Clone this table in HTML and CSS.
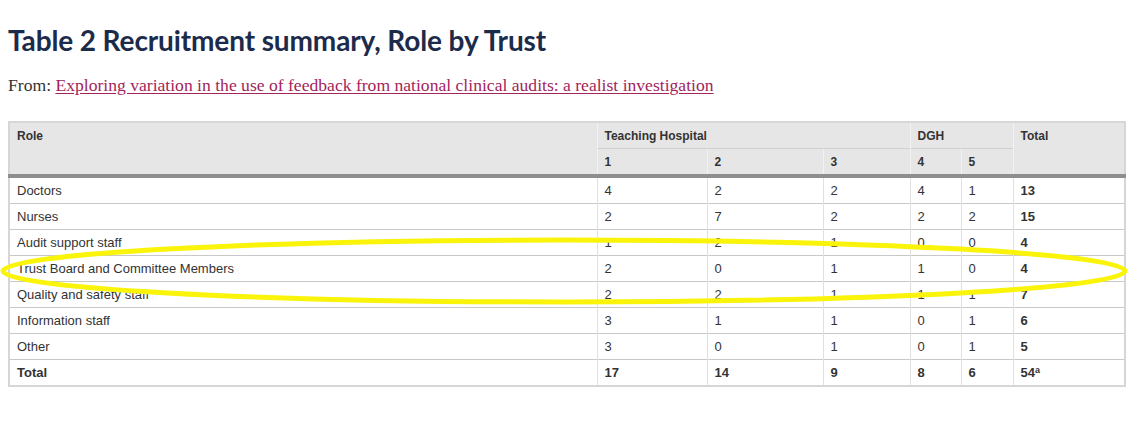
FILE: index.html
```html
<!DOCTYPE html>
<html lang="en">
<head>
<meta charset="utf-8">
<title>Table 2 Recruitment summary, Role by Trust</title>
<link rel="stylesheet" href="styles.css">
</head>
<body>
<div class="page">
  <h1 class="title">Table 2 Recruitment summary, Role by Trust</h1>
  <p class="from">From: <a class="src-link" href="#">Exploring variation in the use of feedback from national clinical audits: a realist investigation</a></p>
  <table class="data">
    <colgroup>
      <col class="c-role"><col class="c-1"><col class="c-2"><col class="c-3"><col class="c-4"><col class="c-5"><col class="c-total">
    </colgroup>
    <thead>
      <tr>
        <th rowspan="2">Role</th>
        <th colspan="3" class="grp">Teaching Hospital</th>
        <th colspan="2" class="grp">DGH</th>
        <th rowspan="2">Total</th>
      </tr>
      <tr class="sub">
        <th>1</th><th>2</th><th>3</th><th>4</th><th>5</th>
      </tr>
    </thead>
    <tbody>
      <tr><td>Doctors</td><td>4</td><td>2</td><td>2</td><td>4</td><td>1</td><td class="b">13</td></tr>
      <tr><td>Nurses</td><td>2</td><td>7</td><td>2</td><td>2</td><td>2</td><td class="b">15</td></tr>
      <tr><td>Audit support staff</td><td>1</td><td>2</td><td>1</td><td>0</td><td>0</td><td class="b">4</td></tr>
      <tr><td>Trust Board and Committee Members</td><td>2</td><td>0</td><td>1</td><td>1</td><td>0</td><td class="b">4</td></tr>
      <tr><td>Quality and safety staff</td><td>2</td><td>2</td><td>1</td><td>1</td><td>1</td><td class="b">7</td></tr>
      <tr><td>Information staff</td><td>3</td><td>1</td><td>1</td><td>0</td><td>1</td><td class="b">6</td></tr>
      <tr><td>Other</td><td>3</td><td>0</td><td>1</td><td>0</td><td>1</td><td class="b">5</td></tr>
      <tr class="tot"><td>Total</td><td>17</td><td>14</td><td>9</td><td>8</td><td>6</td><td>54<sup>a</sup></td></tr>
    </tbody>
  </table>
</div>
<svg class="mark" width="1141" height="446" viewBox="0 0 1141 446" aria-hidden="true">
  <ellipse cx="564" cy="271" rx="561" ry="31" fill="none" stroke="#faf40a" stroke-width="5"/>
</svg>
</body>
</html>
```
FILE: styles.css
```css
html, body {
  margin: 0;
  padding: 0;
  background: #ffffff;
}

.page {
  padding: 23px 0 0 8px;
}

.title {
  margin: 0;
  font-family: Lato, "Open Sans", sans-serif;
  font-weight: 700;
  font-size: 28px;
  line-height: 34px;
  letter-spacing: -0.12px;
  color: #1d2b4b;
}

.from {
  margin: 18px 0 0 0;
  font-family: "Liberation Serif", "DejaVu Serif", serif;
  font-size: 17.6px;
  line-height: 20px;
  color: #333333;
}

.src-link {
  color: #a2245a;
  text-decoration: underline;
  text-underline-offset: 2px;
}

.data {
  margin-top: 26px;
  width: 1116px;
  border-collapse: collapse;
  border: 2px solid #d6d6d6;
  font-family: "Liberation Sans", Arial, sans-serif;
  font-size: 13px;
  color: #333333;
  table-layout: fixed;
}

.c-role { width: 588px; }
.c-1 { width: 110px; }
.c-2 { width: 116px; }
.c-3 { width: 87px; }
.c-4 { width: 51px; }
.c-5 { width: 52px; }
.c-total { width: 112px; }

.data th,
.data td {
  text-align: left;
  padding: 0 7px;
  height: 25px;
  line-height: 16px;
  vertical-align: middle;
}

.data th {
  background: #e6e6e6;
  font-weight: 700;
  font-size: 12px;
  color: #333333;
  border-left: 1px solid #f2f2f2;
  border-top: 1px solid #d0d0d0;
}

.data th[rowspan] {
  vertical-align: top;
  padding-top: 5px;
}

.data thead tr.sub th {
  border-bottom: 4px solid #8e8e8e;
}

.data thead th[rowspan] {
  border-bottom: 4px solid #8e8e8e;
}

.data td {
  border-top: 1px solid #c8c8c8;
  border-left: 1px solid #e0e0e0;
}

.data td.b,
.data tr.tot td {
  font-weight: 700;
}

.data sup {
  font-size: 9px;
  line-height: 0;
  vertical-align: 4px;
}

.mark {
  position: absolute;
  left: 0;
  top: 0;
  pointer-events: none;
}
```
